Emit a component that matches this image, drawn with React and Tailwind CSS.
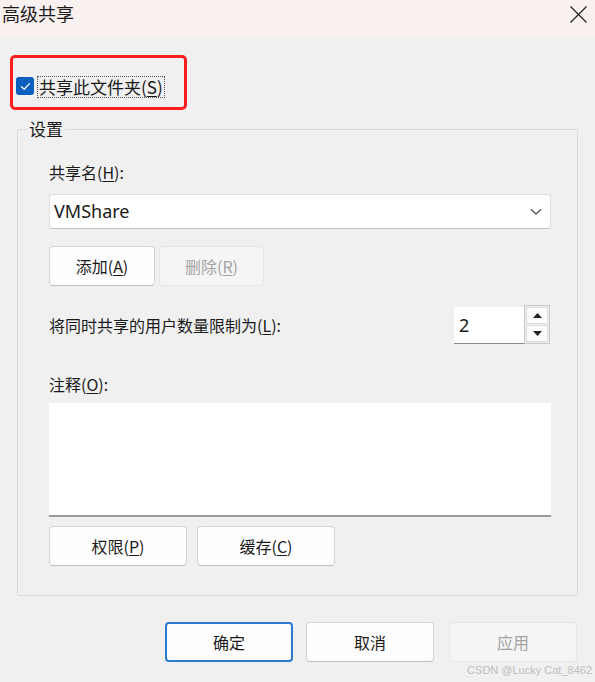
const font = { fontFamily: '"Noto Sans CJK SC", "Noto Sans", sans-serif' };

function Btn({ children, disabled, primary, className = '' }) {
  const base = 'flex items-center justify-center rounded-[4px] text-[16px]';
  const look = disabled
    ? 'bg-[#f5f5f5] border border-[#e6e6e6] text-[#a3a3a3]'
    : primary
      ? 'bg-[#fdfdfd] border-2 border-[#2a7bd0] text-[#1a1a1a]'
      : 'bg-[#fdfdfd] border border-[#d4d4d4] border-b-[#bdbdbd] text-[#1a1a1a]';
  return <div className={`${base} ${look} ${className}`}>{children}</div>;
}

function U({ children }) {
  return <span className="underline underline-offset-2">{children}</span>;
}

export default function App() {
  return (
    <div className="w-[595px] h-[682px] bg-[#f0f0f0] relative overflow-hidden text-[#1a1a1a]" style={font}>
      {/* title bar */}
      <div className="h-[37px] bg-[#f9f0f0] flex justify-between items-start">
        <span className="pl-[2px] pt-[1px] text-[18px] leading-[24px]">高级共享</span>
        <svg width="17" height="17" viewBox="0 0 17 17" className="mt-[6px] mr-[8px]">
          <path d="M0.5 0.5 L16.5 16.5 M16.5 0.5 L0.5 16.5" stroke="#222" strokeWidth="1.2" />
        </svg>
      </div>

      {/* share checkbox */}
      <div className="mt-[18px] ml-[10px] w-[177px] h-[55px] border-[3px] border-[#ff1d1d] rounded-[5px] flex items-start pt-[18px] pl-[3px]">
        <div className="w-[18px] h-[18px] rounded-[3px] bg-[#0a5fbf] flex items-center justify-center mt-[1px]">
          <svg width="11" height="9" viewBox="0 0 11 9" fill="none">
            <path d="M1.5 4.8 L4.2 7.3 L9.5 1.6" stroke="#fff" strokeWidth="1.3" strokeLinecap="round" strokeLinejoin="round" />
          </svg>
        </div>
        <span className="ml-[3px] text-[17px] leading-[20px] border border-dotted border-[#555] px-[1px]">
          共享此文件夹(<U>S</U>)
        </span>
      </div>

      {/* settings group */}
      <div className="relative mt-[19px] ml-[17px] w-[561px] h-[467px] border border-[#dadada] rounded-[2px] pl-[31px] pr-[26px]">
        <span className="absolute left-[9px] top-[-12px] bg-[#f0f0f0] px-[2px] text-[17px] leading-[22px]">设置</span>

        <div className="mt-[31px] text-[16px] leading-[22px]">共享名(<U>H</U>):</div>
        <div className="mt-[11px] h-[35px] bg-white border border-[#dedede] border-b-[#c4c4c4] rounded-[3px] flex items-center justify-between pl-[4px] pr-[8px]">
          <span className="text-[18px]" style={{ fontFamily: '"Noto Sans", sans-serif' }}>VMShare</span>
          <svg width="12" height="8" viewBox="0 0 12 8" fill="none">
            <path d="M1 1.5 L6 6 L11 1.5" stroke="#444" strokeWidth="1.2" />
          </svg>
        </div>

        <div className="mt-[17px] flex gap-[4px]">
          <Btn className="w-[106px] h-[40px]">添加(<U>A</U>)</Btn>
          <Btn disabled className="w-[105px] h-[40px]">删除(<U>R</U>)</Btn>
        </div>

        <div className="mt-[19px] flex items-center justify-between">
          <span className="text-[16px] leading-[22px]">将同时共享的用户数量限制为(<U>L</U>):</span>
          <div className="flex h-[39px] mr-[1px]">
            <div className="w-[70px] h-[37px] mt-[2px] bg-white border-b border-[#8a8a8a] flex items-center pl-[5px] text-[18px]" style={{ fontFamily: '"Noto Sans", sans-serif' }}>2</div>
            <div className="w-[26px] border border-[#c8c8c8] flex flex-col p-[1px] gap-[1px] bg-[#f0f0f0]">
              <div className="flex-1 bg-[#fbfbfb] border border-[#dcdcdc] flex items-center justify-center">
                <svg width="9" height="5" viewBox="0 0 9 5"><path d="M0 5 L4.5 0 L9 5 Z" fill="#222" /></svg>
              </div>
              <div className="flex-1 bg-[#fbfbfb] border border-[#dcdcdc] flex items-center justify-center">
                <svg width="9" height="5" viewBox="0 0 9 5"><path d="M0 0 L9 0 L4.5 5 Z" fill="#222" /></svg>
              </div>
            </div>
          </div>
        </div>

        <div className="mt-[29px] text-[16px] leading-[22px]">注释(<U>O</U>):</div>
        <div className="mt-[8px] h-[114px] bg-white border-b-2 border-[#9a9a9a]" />

        <div className="mt-[9px] flex gap-[10px]">
          <Btn className="w-[138px] h-[40px]">权限(<U>P</U>)</Btn>
          <Btn className="w-[138px] h-[40px]">缓存(<U>C</U>)</Btn>
        </div>
      </div>

      {/* dialog buttons */}
      <div className="mt-[26px] flex justify-end pr-[18px]">
        <Btn primary className="w-[128px] h-[40px]">确定</Btn>
        <Btn className="w-[128px] h-[40px] ml-[13px]">取消</Btn>
        <Btn disabled className="w-[128px] h-[40px] ml-[15px]">应用</Btn>
      </div>

      <span className="absolute right-[3px] bottom-[4px] text-[11px] text-[#bdbdbd]" style={{ fontFamily: '"Liberation Sans", sans-serif' }}>
        CSDN @Lucky Cat_8462
      </span>
    </div>
  );
}
